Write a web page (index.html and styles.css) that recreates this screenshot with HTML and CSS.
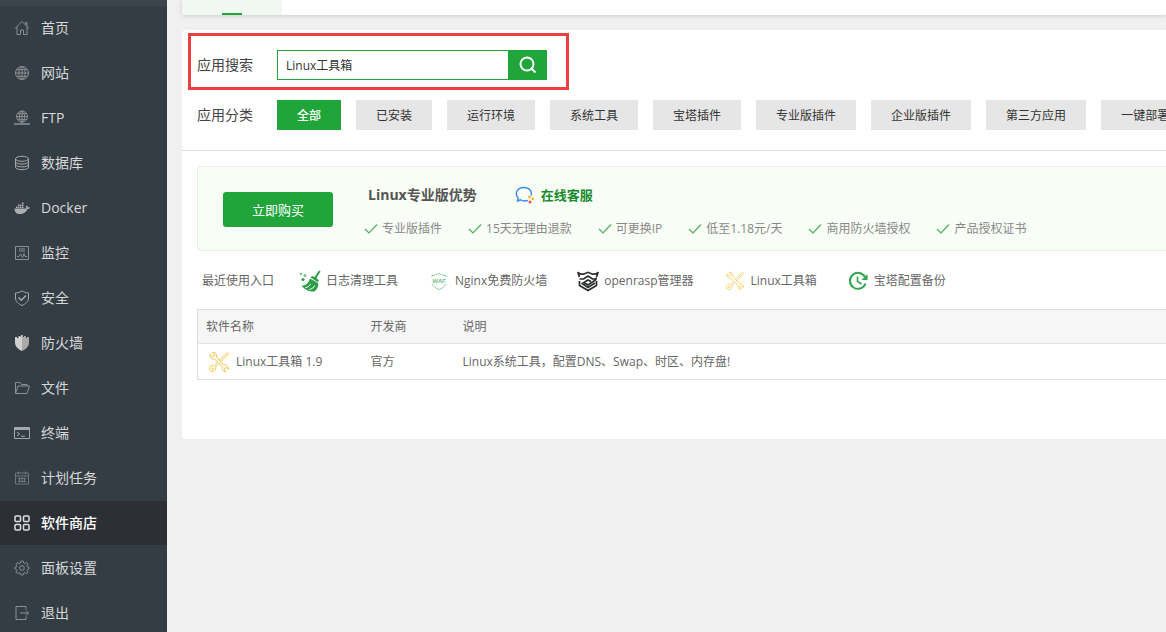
FILE: index.html
```html
<!DOCTYPE html>
<html lang="zh-CN">
<head>
<meta charset="utf-8">
<title>软件商店</title>
<link rel="stylesheet" href="styles.css">
</head>
<body>
<svg class="sprite" aria-hidden="true">
  <symbol id="check" viewBox="0 0 14 14"><path d="M1 7 5 11 13 2.500" fill="none" stroke="#4fae60" stroke-width="1.2"/></symbol>
  <symbol id="tools" viewBox="0 0 22 22">
    <g fill="none" stroke="currentColor" stroke-linejoin="round">
      <path d="M2 3.500 4.500 5.500 6.300 4.800 6.500 3 4.500 1.500C7 .8 9.300 3 8.500 6L16 14C18.500 13.200 21 15.500 20.300 18L18.300 16.500 16.500 17.300 16.300 19 18 20.500C15.500 21 13.500 18.500 14.500 16L6.500 8C3.800 8.700 1.500 6 2 3.500Z"/>
      <path d="M19.500 1.500 20.700 2.700 13 10.500M19.500 1.500 11 9.500M9 12 6.300 14.700M10.500 13 7.500 15.800"/>
      <path d="M6.300 14.700C4 13.800 1.500 15.500 1.500 17.800 1.500 20 4.500 21.500 6.500 19.700 7.700 18.600 8 17.300 7.500 15.800"/>
      <circle cx="4.600" cy="17.700" r=".8"/>
    </g>
  </symbol>
</svg>
<div class="app">
  <nav class="sidebar" aria-label="主菜单">
    <ul class="menu">
      <li><a class="menu-link" href="#"><svg class="menu-icon" viewBox="0 0 16 16"><path d="M1 8.500 8 1.500 15 8.500M3 7v7.500h3.500V10h3v4.500H13V7M11.500 4.500V2.500h1.500V6"/></svg>首页</a></li>
      <li><a class="menu-link" href="#"><svg class="menu-icon" viewBox="0 0 16 16"><circle cx="8" cy="8" r="6.500"/><ellipse cx="8" cy="8" rx="3.200" ry="6.500"/><path d="M8 1.500v13M1.500 8h13M2.500 4.700h11M2.500 11.300h11"/></svg>网站</a></li>
      <li><a class="menu-link" href="#"><svg class="menu-icon" viewBox="0 0 16 16"><circle cx="8" cy="6.500" r="5.500"/><ellipse cx="8" cy="6.500" rx="2.600" ry="5.500"/><path d="M8 1v13M2.500 6.500h11M3.500 3.700h9M3.500 9.300h9"/><path d="M0 14h16M6 14h4" stroke-width="1.600"/></svg>FTP</a></li>
      <li><a class="menu-link" href="#"><svg class="menu-icon bright" viewBox="0 0 16 16"><ellipse cx="8" cy="3.800" rx="6.500" ry="2.500"/><path d="M1.500 3.800v8.400c0 3.300 13 3.300 13 0V3.800M1.500 6.600c0 3.300 13 3.300 13 0M1.500 9.400c0 3.300 13 3.300 13 0"/></svg>数据库</a></li>
      <li><a class="menu-link" href="#"><svg class="menu-icon solid" viewBox="0 0 16 16"><path d="M.5 8.500H11.800C12.500 8 12.300 6.700 11.800 6L12.500 5.500C13.500 6 13.800 6.700 13.800 7.300 14.600 7.100 15.400 7.200 16 7.700 15.400 8.700 14.500 9 13.500 9 12 12.500 9.500 14 6 14 2.500 14 .5 12 .5 8.500ZM2 6.400h1.500v1.500H2zM4 6.400h1.500v1.500H4zM6 6.400h1.500v1.500H6zM8 6.400h1.500v1.500H8zM4 4.400h1.500v1.500H4zM6 4.400h1.500v1.500H6zM8 4.400h1.500v1.500H8zM8 2.400h1.500v1.500H8z"/></svg>Docker</a></li>
      <li><a class="menu-link" href="#"><svg class="menu-icon" viewBox="0 0 16 16"><path d="M1.500 1.500h13v13h-13zM5 4h6M5 6h6" /><path d="M3 11.500h2L6.500 9 8.500 12.500 10 8.500 11 11.500h2"/></svg>监控</a></li>
      <li><a class="menu-link" href="#"><svg class="menu-icon bright" viewBox="0 0 16 16"><path d="M8 .8C6 2.200 4 2.800 1.500 3V8C1.500 11.500 4.500 14 8 15.500 11.500 14 14.500 11.500 14.500 8V3C12 2.800 10 2.200 8 .8Z"/><path d="M4.500 7.500 7.300 10.300 12 5.500" stroke-width="1.500"/></svg>安全</a></li>
      <li><a class="menu-link" href="#"><svg class="menu-icon solid" viewBox="0 0 16 16"><path d="M8 0v16C4 14 1 11.500 1 7.500V2h2v1h1.500V1h2v1H7V0Z" fill="#d0d0d0"/><path d="M8 0h1v2h1V1h2v2h1V2h2v5.500C15 11.500 12 14 8 16Z" fill="#aaa"/></svg>防火墙</a></li>
      <li><a class="menu-link" href="#"><svg class="menu-icon" viewBox="0 0 16 16"><path d="M1.500 13.500v-11H6L7.500 4.500h5.500V6M1.500 13.500 4 6H15.500L13 13.500Z"/></svg>文件</a></li>
      <li><a class="menu-link" href="#"><svg class="menu-icon bright" viewBox="0 0 16 16"><path d="M.5 2.500h15v11H.5zM.5 3.500h15M.5 4.500h15M3 7 5.500 9 3 11M7 11.200h4"/></svg>终端</a></li>
      <li><a class="menu-link" href="#"><svg class="menu-icon dim" viewBox="0 0 16 16"><path d="M1.500 3h13v11h-13zM1.500 6h13M4.500 1.500v3M11.500 1.500v3M4 8.500h8M4 11.500h8M5.500 7.500v5M8 7.500v5M10.500 7.500v5"/></svg>计划任务</a></li>
      <li><a class="menu-link active" href="#" aria-current="page"><svg class="menu-icon" viewBox="0 0 16 16"><rect x="1" y="1" width="5.500" height="5.500" rx="1"/><rect x="9.500" y="1" width="5.500" height="5.500" rx="1"/><rect x="1" y="9.500" width="5.500" height="5.500" rx="1"/><rect x="9.500" y="9.500" width="5.500" height="5.500" rx="1"/></svg>软件商店</a></li>
      <li><a class="menu-link" href="#"><svg class="menu-icon" viewBox="0 0 16 16"><path d="M6.700 1.200h2.600l.4 1.900 1.200.5 1.600-1.100 1.500 1.600-1 1.600.5 1.200 1.500.3v1.800l-1.500.4-.5 1.200 1 1.600-1.500 1.500-1.600-1-1.200.5-.4 1.600H6.700l-.4-1.600-1.200-.5-1.600 1L2 12.200l1-1.600-.5-1.200L1 9V7.200l1.500-.3.5-1.200-1-1.600 1.500-1.600 1.600 1.100 1.200-.5Z"/><circle cx="8" cy="8" r="2.300"/></svg>面板设置</a></li>
      <li><a class="menu-link" href="#"><svg class="menu-icon" viewBox="0 0 16 16"><path d="M12 4.500V1.500H2v13h10v-3M6 8h8.500M12 5.500 14.500 8 12 10.500"/></svg>退出</a></li>
    </ul>
  </nav>

  <main class="main">
    <div class="tabs"><a class="tab" href="#" aria-label="应用"></a></div>

    <section class="card">
      <div class="filters">
        <form class="row search">
          <label class="row-label" for="q">应用搜索</label>
          <div class="search-box">
            <input class="search-input" id="q" type="text" value="Linux工具箱">
            <button class="search-button" type="button" aria-label="搜索"><svg viewBox="0 0 18 18" width="18" height="18"><circle cx="8" cy="8" r="6.500"/><path d="M12.500 12.500 16.500 16.500"/></svg></button>
          </div>
        </form>
        <div class="row">
          <span class="row-label">应用分类</span>
          <div class="categories">
            <button class="category selected" type="button">全部</button>
            <button class="category" type="button">已安装</button>
            <button class="category" type="button">运行环境</button>
            <button class="category" type="button">系统工具</button>
            <button class="category" type="button">宝塔插件</button>
            <button class="category" type="button">专业版插件</button>
            <button class="category" type="button">企业版插件</button>
            <button class="category" type="button">第三方应用</button>
            <button class="category" type="button">一键部署</button>
          </div>
        </div>
      </div>

      <div class="body">
        <div class="banner">
          <button class="buy" type="button">立即购买</button>
          <div class="banner-text">
            <div class="banner-head">
              <h2 class="banner-title">Linux专业版优势</h2>
              <a class="service" href="#">
                <svg width="20" height="18" viewBox="0 0 20 18"><path d="M13 14.500C9 15.500 6.500 14.500 5.500 13.800L2.500 15 3.200 12.200C-1 7.500 2.500 1.500 8.700 1.500 14.500 1.500 17.500 5.500 16 9.500" fill="none" stroke="#3c8aee" stroke-width="1.400"/><circle cx="14.500" cy="11" r="1.400" fill="#f5b82e"/><circle cx="17.800" cy="13" r="1.400" fill="#f5b82e"/><circle cx="15" cy="16" r="1.500" fill="#f0563d"/></svg>在线客服</a>
            </div>
            <ul class="benefits">
              <li><svg><use href="#check"/></svg>专业版插件</li>
              <li><svg><use href="#check"/></svg>15天无理由退款</li>
              <li><svg><use href="#check"/></svg>可更换IP</li>
              <li><svg><use href="#check"/></svg>低至1.18元/天</li>
              <li><svg><use href="#check"/></svg>商用防火墙授权</li>
              <li><svg><use href="#check"/></svg>产品授权证书</li>
            </ul>
          </div>
        </div>

        <div class="recent">
          <span>最近使用入口</span>
          <ul class="recent-list">
            <li><a class="recent-link" href="#"><svg class="app-icon" viewBox="0 0 22 22"><path d="M20 .5 21.500 1.500 17.500 8 20 10.500 18.500 12 11.500 7.500 13 6 15.500 7Z" fill="#2f9e4c"/><path d="M11 8.500 19 13C20 16 18 19.500 15.500 21.500 9.500 22 5 19 2.500 15.500 6 16 9.500 13.500 11 8.500Z" fill="#2f9e4c"/><path d="M6.500 17.500C8.500 17.500 10.500 16 11.500 14M10.500 19.500C13 19 15 17.500 15.500 15.500" fill="none" stroke="#fff"/><circle cx="2" cy="4" r="1.200" fill="#74c48a"/><circle cx="6" cy="5.500" r="1.500" fill="#74c48a"/><circle cx="4" cy="9.500" r="1.600" fill="#2f9e4c"/></svg>日志清理工具</a></li>
            <li><a class="recent-link" href="#"><svg class="app-icon" viewBox="0 0 22 22"><path d="M4 7.500V5.500C7 5.500 9 4.500 11 3 13 4.500 15 5.500 18 5.500V7.500M4 13.500C5 16.500 8 18.500 11 19.500 14 18.500 17 16.500 18 13.500" fill="none" stroke="#8ccf9e"/><text class="waf" x="11" y="13" text-anchor="middle">WAF</text></svg>Nginx免费防火墙</a></li>
            <li><a class="recent-link" href="#"><svg class="app-icon" viewBox="0 0 22 22"><g fill="none" stroke="#292b2c" stroke-width="1.700"><path d="M.8 2 2.500 7M21.200 2 19.500 7M.8 2.500C3 4.300 5 4.500 7 4L11 2.300 15 4C17 4.500 19 4.300 21.200 2.500"/><path d="M2.500 9 6.500 9 11 6 15.500 9 19.500 9M19.500 7.500 18.500 10 11 15 7 12.500 11 10 14 11.500"/><path d="M2.500 11V15.500L11 20.500 19.500 15.500V11M4.500 13 11 17.500 18 13"/></g></svg>openrasp管理器</a></li>
            <li><a class="recent-link" href="#"><svg class="app-icon pale"><use href="#tools" x="1" y="1" width="20" height="20"/></svg>Linux工具箱</a></li>
            <li><a class="recent-link" href="#"><svg class="app-icon" viewBox="0 0 22 22"><path d="M18 7A8 8 0 1 0 18.500 13.500" fill="none" stroke="#35a553" stroke-width="2"/><path d="M20.500 4V10H14.500Z" fill="#35a553"/><path d="M10.500 6.500V11.500L14.500 14" fill="none" stroke="#35a553" stroke-width="1.600"/></svg>宝塔配置备份</a></li>
          </ul>
        </div>

        <table class="software">
          <thead><tr><th class="col-name" scope="col">软件名称</th><th class="col-vendor" scope="col">开发商</th><th scope="col">说明</th></tr></thead>
          <tbody><tr><td><a class="software-link" href="#"><svg class="app-icon gold"><use href="#tools" width="22" height="22"/></svg>Linux工具箱 1.9</a></td><td>官方</td><td>Linux系统工具，配置DNS、Swap、时区、内存盘!</td></tr></tbody>
        </table>
      </div>
      <div class="highlight"></div>
    </section>
  </main>
</div>
</body>
</html>
```
FILE: styles.css
```css
* { box-sizing: border-box; }

body {
  margin: 0;
  overflow: hidden;
  background: #f0f0f0;
  color: #666;
  font: 12px/20px "Open Sans", "Noto Sans CJK SC", sans-serif;
}

ul { margin: 0; padding: 0; list-style: none; }
a { color: inherit; text-decoration: none; }
button, input { font: inherit; border: 0; border-radius: 0; }
svg { flex: none; }

.sprite { position: absolute; width: 0; height: 0; }

.app { display: flex; min-height: 100vh; }

.sidebar {
  flex: none;
  width: 167px;
  background: #353d44;
  border-top: 6px solid #3d444b;
}

.menu { display: grid; gap: 1px; }

.menu-link {
  display: flex;
  align-items: center;
  gap: 11px;
  height: 44px;
  padding-left: 14px;
  color: #d6d8da;
  font-size: 14px;
}

.menu-link.active { background: #2c3036; color: #fff; font-weight: 500; }

.menu-icon {
  width: 16px;
  height: 16px;
  fill: none;
  stroke: #8b9094;
}
.menu-icon.bright { stroke: #a5a9ac; }
.menu-icon.dim { stroke: #70777c; }
.menu-icon.solid { fill: #adb0b2; stroke: none; }
.active .menu-icon { stroke: #dcdddd; stroke-width: 1.5; }

.main { flex: 1; min-width: 0; padding-left: 15px; }

.tabs {
  height: 15px;
  background: #fff;
  border-bottom-left-radius: 4px;
  box-shadow: 0 1px 4px rgba(0, 0, 0, .15);
}

.tab {
  display: flex;
  align-items: flex-end;
  justify-content: center;
  width: 100px;
  height: 100%;
  background: #f1f8f2;
}
.tab::after { content: ""; width: 20px; height: 2px; background: #20a53a; }

.card {
  position: relative;
  margin-top: 15px;
  padding-bottom: 59px;
  background: #fff;
  border-radius: 4px 0 0 4px;
}

.filters {
  display: grid;
  gap: 20px;
  padding: 20px 0 20px 15px;
  border-bottom: 1px solid #ddd;
}

.row { display: flex; align-items: center; min-width: 0; }
.row-label { flex: none; width: 80px; color: #444; font-size: 14px; }

.search-box { display: flex; height: 30px; }
.search-input {
  width: 231px;
  padding: 2px 8px 0;
  border: 1px solid #20a53a;
  border-right: 0;
  color: #333;
  outline: 0;
}
.search-button {
  display: grid;
  place-items: center;
  width: 39px;
  padding: 0;
  background: #20a53a;
}
.search-button svg { fill: none; stroke: #fff; stroke-width: 2; }

.categories { display: flex; gap: 15px; }
.category {
  flex: none;
  height: 30px;
  padding: 2px 20px 0;
  background: #e6e6e6;
  color: #333;
}
.category.selected { background: #20a53a; color: #fff; font-weight: 500; }

.highlight {
  position: absolute;
  top: 3px;
  left: 6px;
  width: 381px;
  height: 57px;
  border: 3px solid #eb4040;
  pointer-events: none;
}

.body { padding: 15px 0 0 15px; }

.banner {
  display: flex;
  align-items: center;
  gap: 30px;
  height: 85px;
  padding: 2px 0 0 25px;
  background: #f8fdf6;
  border: 1px solid #e7ede8;
  border-right: 0;
  border-radius: 4px 0 0 4px;
}

.buy {
  flex: none;
  width: 110px;
  height: 35px;
  border-radius: 3px;
  background: #20a53a;
  color: #fff;
  font-size: 13px;
}

.banner-text { display: grid; gap: 14px; padding-top: 4px; white-space: nowrap; }
.banner-head { display: flex; align-items: center; gap: 38px; padding-left: 5px; }
.banner-title { margin: 0; color: #555; font-size: 14px; line-height: 20px; }
.service {
  display: flex;
  align-items: center;
  gap: 6px;
  color: #1a8a30;
  font-size: 13px;
  font-weight: 700;
}

.benefits { display: flex; gap: 26px; padding-left: 1px; color: #888; }
.benefits li { display: flex; align-items: center; gap: 4px; }
.benefits svg { width: 14px; height: 14px; }

.recent {
  display: flex;
  align-items: center;
  gap: 25px;
  height: 58px;
  padding: 2px 0 0 5px;
  white-space: nowrap;
}
.recent-list { display: flex; gap: 30px; }
.recent-link { display: flex; align-items: center; gap: 5px; }

.app-icon { width: 22px; height: 22px; }
.pale { color: #f9cf60; }
.gold { color: #f4c44a; }
.waf { fill: #6cc183; font: italic bold 6px "Liberation Sans", sans-serif; }

.software {
  width: 100%;
  border: 1px solid #ddd;
  border-right: 0;
  border-collapse: collapse;
  text-align: left;
}
.software th { height: 34px; padding: 0 8px; background: #f6f6f6; font-weight: 400; }
.software td { height: 36px; padding: 0 8px; border-top: 1px solid #e5e5e5; }
.col-name { width: 165px; }
.col-vendor { width: 92px; }
.software-link { display: flex; align-items: center; gap: 6px; padding-left: 2px; }
```
